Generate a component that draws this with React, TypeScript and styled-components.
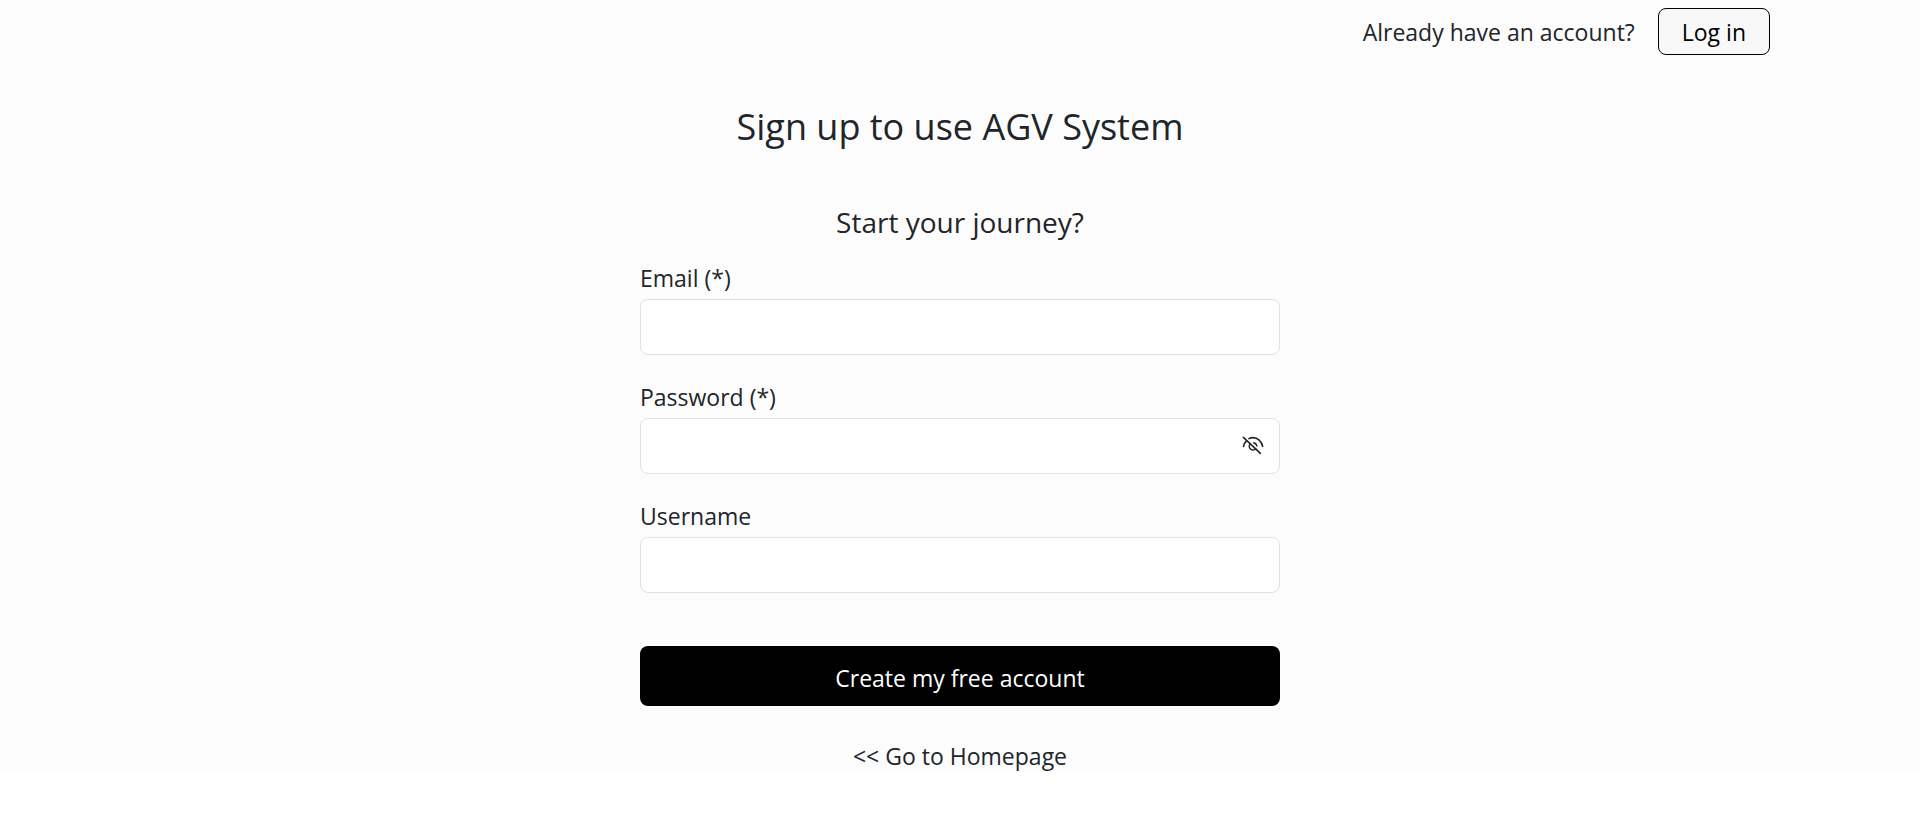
import React, { useState } from "react";
import styled, { createGlobalStyle } from "styled-components";

const GlobalStyle = createGlobalStyle`
  *, *::before, *::after { box-sizing: border-box; }
  body {
    margin: 0;
    background: #fff;
    color: #212529;
    font-family: "Segoe UI", "Open Sans", "Noto Sans", sans-serif;
    font-size: 23px;
    line-height: 36px;
  }
`;

const Page = styled.div`
  background: #fcfcfc;
`;

const TopBar = styled.header`
  display: flex;
  justify-content: flex-end;
  align-items: center;
  gap: 23px;
  padding: 8px 150px 0 24px;
`;

const LoginButton = styled.button`
  height: 47px;
  padding: 0 23px;
  border: 1px solid #000;
  border-radius: 8px;
  background: #f8f8f8;
  color: #000;
  font: inherit;
  cursor: pointer;
`;

const Main = styled.main`
  width: 100%;
  max-width: 640px;
  margin: 0 auto;
  padding-top: 48px;
`;

const Title = styled.h1`
  margin: 0;
  font-size: 36px;
  font-weight: 400;
  line-height: 48px;
  text-align: center;
`;

const Subtitle = styled.h2`
  margin: 53px 0 20px;
  font-size: 28px;
  font-weight: 400;
  line-height: 36px;
  text-align: center;
`;

const Form = styled.form`
  display: flex;
  flex-direction: column;
`;

const Field = styled.div`
  display: flex;
  flex-direction: column;
  gap: 3px;
  margin-bottom: 24px;
`;

const InputFrame = styled.div`
  display: flex;
  align-items: center;
  height: 56px;
  padding-right: 14px;
  border: 1px solid #dee2e6;
  border-radius: 8px;
  background: #fff;
`;

const Input = styled.input`
  flex: 1;
  min-width: 0;
  height: 100%;
  padding: 0 18px;
  border: 0;
  border-radius: 8px;
  outline: 0;
  background: transparent;
  color: inherit;
  font: inherit;
`;

const ToggleButton = styled.button`
  display: flex;
  padding: 0;
  border: 0;
  background: none;
  color: #212529;
  cursor: pointer;
`;

const SubmitButton = styled.button`
  height: 60px;
  margin-top: 29px;
  padding: 3px 24px 0;
  border: 0;
  border-radius: 8px;
  background: #000;
  color: #fff;
  font: inherit;
  cursor: pointer;
`;

const HomeLink = styled.a`
  display: block;
  padding-top: 34px;
  color: inherit;
  line-height: 32px;
  text-align: center;
  text-decoration: none;
`;

const EyeOffIcon = () => (
  <svg
    width="24"
    height="22"
    viewBox="0 0 24 22"
    fill="none"
    stroke="currentColor"
    strokeWidth="1.6"
    strokeLinecap="round"
    aria-hidden="true"
  >
    <path d="M2.5 11.4C2.9 9.3 3.9 7.4 5.5 5.9" />
    <path d="M7.9 3.6C9.1 3 10.5 2.6 12 2.6C16.7 2.6 20.6 6.4 21.6 11.4" />
    <path d="M9.3 8.7A3.7 3.7 0 1 0 14.8 13.8" />
    <path d="M12.9 7.9A3.7 3.7 0 0 1 15.8 10.8" />
    <path d="M2.4 2.3L19.4 18.3" />
  </svg>
);

export default function App() {
  const [visible, setVisible] = useState(false);
  return (
    <>
      <GlobalStyle />
      <Page>
        <TopBar>
          <span>Already have an account?</span>
          <LoginButton type="button">Log in</LoginButton>
        </TopBar>
        <Main>
          <Title>Sign up to use AGV System</Title>
          <Subtitle>Start your journey?</Subtitle>
          <Form onSubmit={(e) => e.preventDefault()}>
            <Field>
              <label htmlFor="email">Email (*)</label>
              <InputFrame>
                <Input id="email" type="email" required />
              </InputFrame>
            </Field>
            <Field>
              <label htmlFor="password">Password (*)</label>
              <InputFrame>
                <Input id="password" type={visible ? "text" : "password"} required />
                <ToggleButton
                  type="button"
                  aria-label={visible ? "Hide password" : "Show password"}
                  onClick={() => setVisible(!visible)}
                >
                  <EyeOffIcon />
                </ToggleButton>
              </InputFrame>
            </Field>
            <Field>
              <label htmlFor="username">Username</label>
              <InputFrame>
                <Input id="username" type="text" />
              </InputFrame>
            </Field>
            <SubmitButton type="submit">Create my free account</SubmitButton>
          </Form>
          <HomeLink href="/">&lt;&lt; Go to Homepage</HomeLink>
        </Main>
      </Page>
    </>
  );
}
